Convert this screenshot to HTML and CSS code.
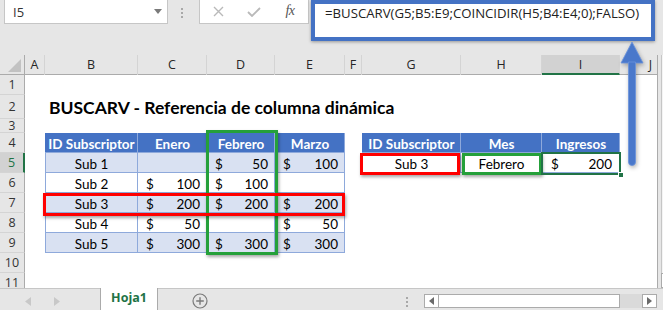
FILE: index.html
```html
<!DOCTYPE html>
<html lang="es">
<head>
<meta charset="utf-8">
<title>BUSCARV</title>
<link rel="stylesheet" href="styles.css">
</head>
<body>
<div class="app">
  <div class="topbar">
    <div class="namebox"><span>I5</span><svg class="caret" width="8" height="5" viewBox="0 0 8 5"><path d="M0 0H8L4 5Z" fill="#7a7a7a"/></svg></div>
    <div class="vdots"><i></i><i></i><i></i></div>
    <div class="fxbox">
      <span class="slot"><svg width="11" height="11" viewBox="0 0 11 11"><path d="M1 1L10 10M10 1L1 10" stroke="#b9b9b9" stroke-width="1.4" fill="none"/></svg></span>
      <span class="slot"><svg width="14" height="10" viewBox="0 0 14 10"><path d="M1 5L5 9L13 1" stroke="#b9b9b9" stroke-width="1.8" fill="none"/></svg></span>
      <span class="slot fx">fx</span>
    </div>
    <div class="formula">=BUSCARV(G5;B5:E9;COINCIDIR(H5;B4:E4;0);FALSO)</div>
  </div>

  <div class="main">
    <div class="sheet">
      <div class="row colhdr">
        <div class="corner"><svg width="13" height="13" viewBox="0 0 13 13"><path d="M13 0V13H0Z" fill="#c2c2c2"/></svg></div>
        <div class="ch">A</div><div class="ch">B</div><div class="ch">C</div><div class="ch">D</div><div class="ch">E</div><div class="ch">F</div><div class="ch">G</div><div class="ch">H</div><div class="ch sel">I</div><div class="ch">J</div>
      </div>
      <div class="row r20">
        <div class="rh">1</div><div></div><div></div><div></div><div></div><div></div><div></div><div></div><div></div><div></div><div></div>
      </div>
      <div class="row r24">
        <div class="rh">2</div><div></div><div class="title">BUSCARV - Referencia de columna dinámica</div><div></div><div></div><div></div><div></div><div></div><div></div><div></div><div></div>
      </div>
      <div class="row r14">
        <div class="rh small">3</div><div></div><div></div><div></div><div></div><div></div><div></div><div></div><div></div><div></div><div></div>
      </div>
      <div class="row r20">
        <div class="rh">4</div><div></div>
        <div class="th">ID Subscriptor</div><div class="th">Enero</div><div class="th">Febrero</div><div class="th">Marzo</div>
        <div></div>
        <div class="th">ID Subscriptor</div><div class="th">Mes</div><div class="th">Ingresos</div>
        <div></div>
      </div>
      <div class="row r20">
        <div class="rh sel">5</div><div></div>
        <div class="td band first ctr">Sub 1</div><div class="td band"></div><div class="td band cur"><span>$</span><span>50</span></div><div class="td band cur"><span>$</span><span>100</span></div>
        <div></div>
        <div class="td ctr">Sub 3</div><div class="td ctr">Febrero</div><div class="td cur right"><span>$</span><span>200</span></div>
        <div></div>
      </div>
      <div class="row r20">
        <div class="rh">6</div><div></div>
        <div class="td first ctr">Sub 2</div><div class="td cur"><span>$</span><span>100</span></div><div class="td cur"><span>$</span><span>100</span></div><div class="td"></div>
        <div></div><div></div><div></div><div></div><div></div>
      </div>
      <div class="row r20">
        <div class="rh">7</div><div></div>
        <div class="td band first ctr">Sub 3</div><div class="td band cur"><span>$</span><span>200</span></div><div class="td band cur"><span>$</span><span>200</span></div><div class="td band cur"><span>$</span><span>200</span></div>
        <div></div><div></div><div></div><div></div><div></div>
      </div>
      <div class="row r20">
        <div class="rh">8</div><div></div>
        <div class="td first ctr">Sub 4</div><div class="td cur"><span>$</span><span>50</span></div><div class="td"></div><div class="td cur"><span>$</span><span>50</span></div>
        <div></div><div></div><div></div><div></div><div></div>
      </div>
      <div class="row r20">
        <div class="rh">9</div><div></div>
        <div class="td band first ctr">Sub 5</div><div class="td band cur"><span>$</span><span>300</span></div><div class="td band cur"><span>$</span><span>300</span></div><div class="td band cur"><span>$</span><span>300</span></div>
        <div></div><div></div><div></div><div></div><div></div>
      </div>
      <div class="row r20">
        <div class="rh">10</div><div></div><div></div><div></div><div></div><div></div><div></div><div></div><div></div><div></div><div></div>
      </div>
      <div class="row r20">
        <div class="rh">11</div><div></div><div></div><div></div><div></div><div></div><div></div><div></div><div></div><div></div><div></div>
      </div>
    </div>
    <div class="vscroll"><div class="vtrack"></div><div class="vbtn"></div></div>
  </div>

  <div class="tabbar">
    <div class="tabnav">
      <svg width="6" height="9" viewBox="0 0 6 9"><path d="M6 0V9L0 4.5Z" fill="#c8c8c8"/></svg>
      <svg width="6" height="9" viewBox="0 0 6 9"><path d="M0 0V9L6 4.5Z" fill="#c8c8c8"/></svg>
    </div>
    <div class="tab">Hoja1</div>
    <div class="addsheet"><svg width="16" height="16" viewBox="0 0 16 16"><circle cx="8" cy="8" r="7" fill="none" stroke="#7a7a7a" stroke-width="1.2"/><path d="M8 4.2V11.8M4.2 8H11.8" stroke="#7a7a7a" stroke-width="1.4"/></svg></div>
    <div class="spacer"></div>
    <div class="hdots"><i></i><i></i><i></i></div>
    <div class="hscroll">
      <div class="sbtn"><svg width="5" height="8" viewBox="0 0 5 8"><path d="M5 0V8L0 4Z" fill="#6a6a6a"/></svg></div>
      <div class="thumb"></div>
      <div class="track"></div>
      <div class="sbtn"><svg width="5" height="8" viewBox="0 0 5 8"><path d="M0 0V8L5 4Z" fill="#6a6a6a"/></svg></div>
    </div>
  </div>

  <div class="hl green-col"></div>
  <div class="hl red-row"></div>
  <div class="hl red-cell"></div>
  <div class="hl green-cell"></div>
  <div class="selection"><span class="handle"></span></div>
  <svg class="arrow" width="30" height="130" viewBox="0 0 30 130">
    <path d="M14 2L25 23H3Z" fill="#4a78cb" stroke="#6b93dc" stroke-width="0.8"/>
    <path d="M10.5 22H17.5V122A3.5 3.5 0 0 1 10.5 122Z" fill="#4a78cb" stroke="#6b93dc" stroke-width="0.8"/>
  </svg>
</div>
</body>
</html>
```

FILE: styles.css
```css
* { box-sizing: border-box; margin: 0; padding: 0; }
html, body { width: 663px; height: 310px; overflow: hidden; background: #e6e6e6; }
body { font-family: "Lato", "Liberation Sans", sans-serif; }

.app { position: relative; width: 663px; height: 310px; background: #e6e6e6; display: flex; flex-direction: column; }

/* formula bar */
.topbar { height: 55px; flex: none; display: flex; align-items: flex-start; }
.namebox { margin-left: 4px; width: 164px; height: 24px; background: #fff; border: 1px solid #c6c6c6; border-top: none; display: flex; align-items: center; justify-content: space-between; padding: 0 5px 0 8px; font: 13px "Open Sans", sans-serif; color: #333; }
.vdots { margin-left: 13px; margin-top: 8px; width: 3px; display: flex; flex-direction: column; gap: 2px; }
.vdots i, .hdots i { display: block; width: 2px; height: 2px; background: #a8a8a8; }
.fxbox { margin-left: 15px; width: 110px; height: 24px; background: #fff; border: 1px solid #c6c6c6; border-top: none; display: flex; }
.slot { width: 36px; display: flex; align-items: center; justify-content: center; }
.fx { font: italic 14px "Liberation Serif", serif; color: #555; padding-bottom: 2px; letter-spacing: -0.5px; }
.formula { margin-left: 2px; width: 344px; height: 41px; background: #fff; border: 4px solid #4472c4; box-shadow: 0 1px 3px rgba(0,0,0,0.35); padding-left: 10px; font: 13.2px/18px "Open Sans", sans-serif; color: #222; white-space: nowrap; }

/* sheet */
.main { height: 233px; flex: none; display: flex; }
.sheet { width: 657px; height: 233px; overflow: hidden; background: #fff; }
.row { display: grid; grid-template-columns: 25px 20px 93px 69px 68px 70px 17px 99px 81px 78px 62px; width: 682px; }
.row > div { display: flex; align-items: center; min-width: 0; white-space: nowrap; }
.r20 { height: 20px; }
.r24 { height: 24px; }
.r14 { height: 14px; }

.colhdr { height: 20px; background: #e6e6e6; border-bottom: 1px solid #ababab; }
.corner { justify-content: flex-end; align-items: flex-end !important; padding: 0 3px 3px 0; border-right: 1px solid #ababab; }
.ch { justify-content: center; font: 12.5px/16px "Open Sans", sans-serif; color: #262626; border-right: 1px solid #d4d4d4; }
.ch.sel { background: #d2d2d2; border-bottom: 2px solid #217346; padding-top: 2px; }

.rh { justify-content: center; background: #e6e6e6; border-right: 1px solid #ababab; border-bottom: 1px solid #d4d4d4; font: 12.5px/13px "Open Sans", sans-serif; color: #333; }
.rh.small { font-size: 12px; line-height: 12px; }
.rh.sel { background: #d2d2d2; color: #217346; border-right: 2px solid #217346; }

.title { font-weight: 700; font-size: 17.5px; color: #000; padding-left: 4px; padding-top: 1px; overflow: visible; }

.th { background: #4472c4; color: #fff; font-weight: 700; font-size: 13.5px; justify-content: center; box-shadow: inset -1px -1px 0 #8ea9db; padding-top: 1px; }
.td { font-size: 13.5px; color: #000; background: #fff; box-shadow: inset -1px -1px 0 #8ea9db; padding-top: 1px; }
.td.band { background: #d9e1f2; }
.td.first { box-shadow: inset 1px 0 0 #8ea9db, inset -1px -1px 0 #8ea9db; }
.ctr { justify-content: center; }
.cur { justify-content: space-between; padding: 1px 7px 0 8px; }
.cur.right { padding-left: 9px; padding-right: 8px; }

.vscroll { width: 6px; display: flex; flex-direction: column; background: #e6e6e6; border-left: 1px solid #ababab; }
.vtrack { flex: 1; margin-left: 3px; border-left: 1px solid #c6c6c6; background: #f4f4f4; }
.vbtn { height: 15px; margin-left: 3px; border: 1px solid #ababab; border-right: none; background: #fff; }

/* tabs */
.tabbar { height: 22px; flex: none; display: flex; background: #e6e6e6; border-top: 1px solid #c6c6c6; }
.tabnav { width: 100px; display: flex; align-items: center; gap: 23px; padding-left: 25px; padding-top: 4px; }
.tab { width: 58px; margin-top: -1px; background: #fff; border-left: 1px solid #ababab; border-right: 1px solid #ababab; display: flex; justify-content: center; padding-top: 1px; font: 700 12.5px "Open Sans", sans-serif; color: #217346; }
.addsheet { margin-left: 34px; padding-top: 4px; }
.spacer { flex: 1; }
.hdots { width: 3px; margin-right: 15px; margin-top: 8px; display: flex; flex-direction: column; gap: 2px; }
.hscroll { width: 233px; height: 14px; margin-top: 5px; margin-right: 6px; display: flex; }
.sbtn { width: 15px; background: #fff; border: 1px solid #ababab; display: flex; align-items: center; justify-content: center; }
.thumb { width: 181px; background: #fff; border: 1px solid #ababab; border-left: none; }
.track { flex: 1; background: #dadada; }

/* overlays */
.hl { position: absolute; border: 3px solid; box-shadow: 1px 2px 3px rgba(0,0,0,0.35); }
.green-col { left: 206px; top: 130px; width: 72px; height: 125px; border-color: #25a03a; }
.red-row { left: 43px; top: 193px; width: 302px; height: 23px; border-color: #ff0000; }
.red-cell { left: 360px; top: 153px; width: 100px; height: 22px; border-color: #ff0000; }
.green-cell { left: 462px; top: 153px; width: 80px; height: 22px; border-color: #25a03a; }
.selection { position: absolute; left: 541px; top: 152px; width: 80px; height: 23px; border: 2px solid #217346; }
.handle { position: absolute; right: -5px; bottom: -5px; width: 6px; height: 6px; background: #217346; border: 1px solid #fff; }
.arrow { position: absolute; left: 618px; top: 40px; filter: drop-shadow(1px 2px 2px rgba(0,0,0,0.3)); }
```
